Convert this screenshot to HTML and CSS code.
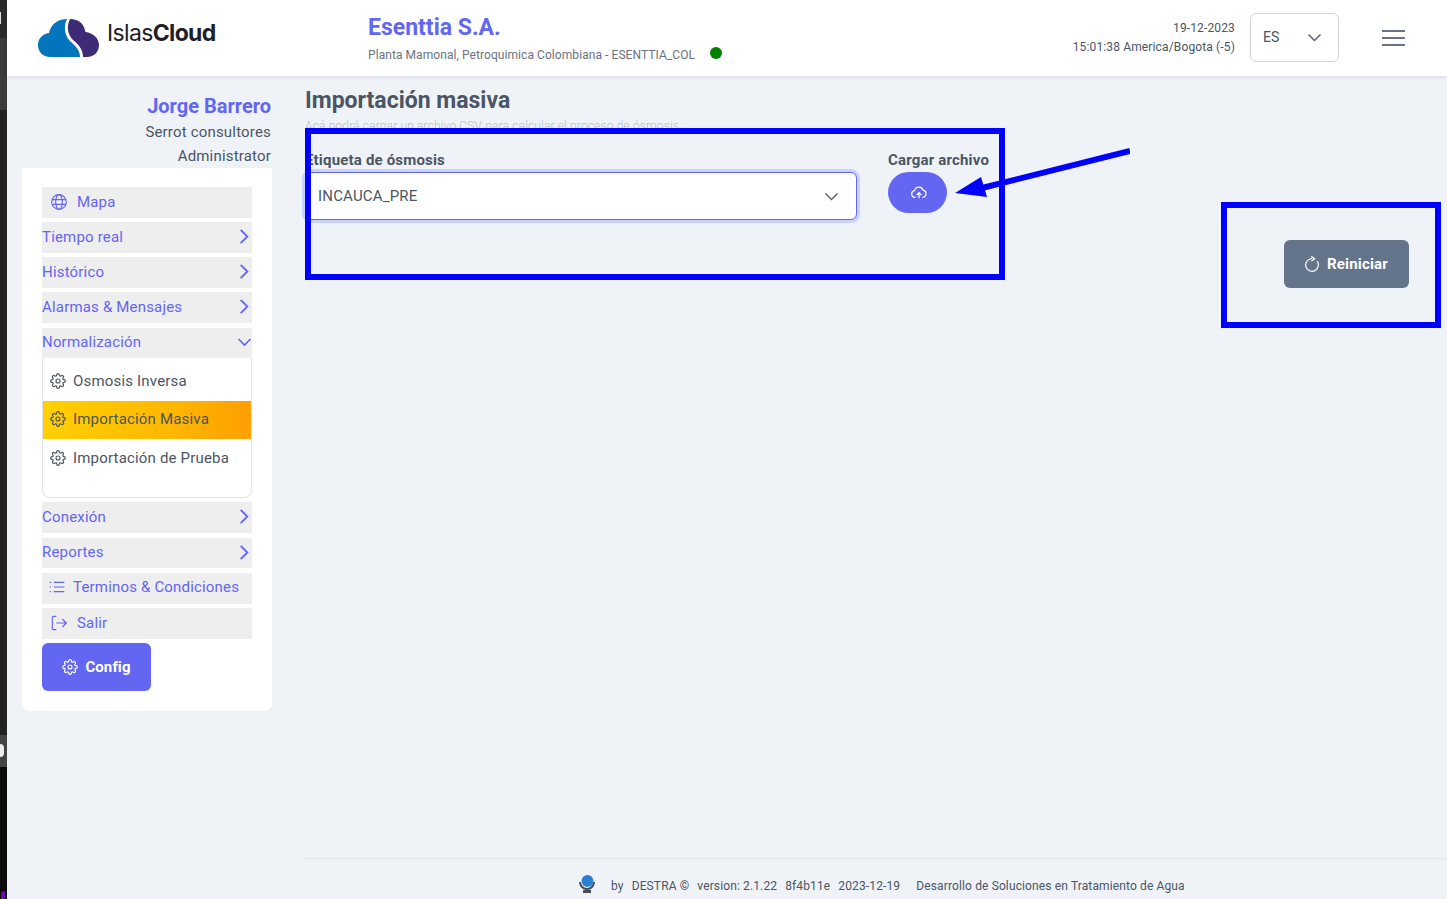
FILE: index.html
```html
<!DOCTYPE html>
<html lang="es">
  <head>
    <meta charset="UTF-8" />
    <meta name="viewport" content="width=device-width, initial-scale=1.0" />
    <title>IslasCloud - Importación masiva</title>
    <link rel="stylesheet" href="styles.css">
  </head>
  <body>
    <svg class="defs" aria-hidden="true">
      <symbol id="gear" viewBox="0 0 24 24">
        <circle cx="12" cy="12" r="3" />
        <path d="M19.4 15a1.65 1.65 0 0 0 .33 1.82l.06.06a2 2 0 0 1 0 2.83 2 2 0 0 1-2.83 0l-.06-.06a1.65 1.65 0 0 0-1.82-.33 1.65 1.65 0 0 0-1 1.51V21a2 2 0 0 1-2 2 2 2 0 0 1-2-2v-.09A1.65 1.65 0 0 0 9 19.4a1.65 1.65 0 0 0-1.82.33l-.06.06a2 2 0 0 1-2.83 0 2 2 0 0 1 0-2.83l.06-.06a1.65 1.65 0 0 0 .33-1.82 1.65 1.65 0 0 0-1.51-1H3a2 2 0 0 1-2-2 2 2 0 0 1 2-2h.09A1.65 1.65 0 0 0 4.6 9a1.65 1.65 0 0 0-.33-1.82l-.06-.06a2 2 0 0 1 0-2.83 2 2 0 0 1 2.83 0l.06.06a1.65 1.65 0 0 0 1.82.33H9a1.65 1.65 0 0 0 1-1.51V3a2 2 0 0 1 2-2 2 2 0 0 1 2 2v.09a1.65 1.65 0 0 0 1 1.51 1.65 1.65 0 0 0 1.82-.33l.06-.06a2 2 0 0 1 2.83 0 2 2 0 0 1 0 2.83l-.06.06a1.65 1.65 0 0 0-.33 1.82V9a1.65 1.65 0 0 0 1.51 1H21a2 2 0 0 1 2 2 2 2 0 0 1-2 2h-.09a1.65 1.65 0 0 0-1.51 1z" />
      </symbol>
      <symbol id="right" viewBox="0 0 12 20"><path d="M2 2l8 8-8 8" /></symbol>
      <symbol id="down" viewBox="0 0 20 12"><path d="M2 2l8 8 8-8" /></symbol>
    </svg>

    <div class="strip">
      <div class="strip-a"></div>
      <div class="strip-b"></div>
      <div class="strip-c"></div>
      <div class="strip-d"></div>
      <div class="strip-e"></div>
    </div>

    <div class="app">
      <header class="topbar">
        <div class="brand">
          <svg class="logo" viewBox="0 0 61 38">
            <path fill="#0275bd" d="M12 38H42C42 30 36 26 32 22C27 17 25 8 29 0C20 0 13 5 11 14C4 15 0 20 0 26C0 33 5 38 12 38Z" />
            <path fill="#3e2a77" d="M45 38C45 30 40 25 35 21C30 16 28 8 32 0C41 0 46 5 47.5 13C55 14 61 19 61 26C61 33 56 38 49 38Z" />
          </svg>
          <span class="brand-name">Islas<b>Cloud</b></span>
        </div>
        <div class="company">
          <h1>Esenttia S.A.</h1>
          <p>Planta Mamonal, Petroquimica Colombiana - ESENTTIA_COL <span class="status-dot"></span></p>
        </div>
        <div class="clock">
          <div>19-12-2023</div>
          <div>15:01:38 America/Bogota (-5)</div>
        </div>
        <div class="lang">
          <span>ES</span>
          <svg class="lang-chevron"><use href="#down" /></svg>
        </div>
        <div class="burger"><i></i><i></i><i></i></div>
      </header>

      <div class="layout">
        <aside class="sidebar">
          <div class="user">
            <div class="user-name">Jorge Barrero</div>
            <div>Serrot consultores</div>
            <div>Administrator</div>
          </div>
          <nav class="menu">
            <a class="row row-icon">
              <svg class="row-svg" viewBox="0 0 24 24">
                <circle cx="12" cy="12" r="11" />
                <ellipse cx="12" cy="12" rx="5" ry="11" />
                <path d="M2 8.500h20M2 15.500h20" />
              </svg>
              Mapa
            </a>
            <a class="row">Tiempo real <svg class="chev"><use href="#right" /></svg></a>
            <a class="row">Histórico <svg class="chev"><use href="#right" /></svg></a>
            <a class="row">Alarmas &amp; Mensajes <svg class="chev"><use href="#right" /></svg></a>
            <a class="row row-open">Normalización <svg class="chev-down"><use href="#down" /></svg></a>
            <div class="submenu">
              <a class="sub-item"><svg class="gear"><use href="#gear" /></svg>Osmosis Inversa</a>
              <a class="sub-item active"><svg class="gear"><use href="#gear" /></svg>Importación Masiva</a>
              <a class="sub-item"><svg class="gear"><use href="#gear" /></svg>Importación de Prueba</a>
            </div>
            <a class="row row-conn">Conexión <svg class="chev"><use href="#right" /></svg></a>
            <a class="row row-reports">Reportes <svg class="chev"><use href="#right" /></svg></a>
            <a class="row row-terms">
              <svg class="row-svg" viewBox="0 0 24 24">
                <path d="M7 5h16M7 12h16M7 19h16" />
                <path d="M1 5h2M1 12h2M1 19h2" />
              </svg>
              Terminos &amp; Condiciones
            </a>
            <a class="row row-exit">
              <svg class="row-svg" viewBox="0 0 24 24">
                <path d="M8 2H3.500a1.500 1.500 0 0 0-1.500 1.500v17a1.500 1.500 0 0 0 1.500 1.500H8" />
                <path d="M8 12h15M17 6l6 6-6 6" />
              </svg>
              Salir
            </a>
            <button class="btn btn-config"><svg class="gear"><use href="#gear" /></svg>Config</button>
          </nav>
        </aside>

        <main class="content">
          <h2>Importación masiva</h2>
          <p class="subtitle">Acá podrá cargar un archivo CSV para calcular el proceso de ósmosis</p>
          <div class="form-row">
            <div class="field">
              <label>Etiqueta de ósmosis</label>
              <div class="select">
                <span>INCAUCA_PRE</span>
                <svg class="select-chevron"><use href="#down" /></svg>
              </div>
            </div>
            <div class="field">
              <label>Cargar archivo</label>
              <button class="upload">
                <svg viewBox="0 0 24 24">
                  <path d="M7 18.500H6a5 5 0 0 1-.6-9.960A6.500 6.500 0 0 1 18 7.600a5.500 5.500 0 0 1-.500 10.900H17" />
                  <path d="M12 20v-8M8.500 15l3.500-3.500 3.500 3.500" />
                </svg>
              </button>
            </div>
          </div>
          <div class="actions">
            <button class="btn btn-reset">
              <svg viewBox="0 0 24 24">
                <path d="M16 4h-3.500A9.500 9.500 0 1 0 21 11" transform="rotate(-22 12 13)" />
                <path d="M11 .5l5 3.500-5 3.500" />
              </svg>
              Reiniciar
            </button>
          </div>
          <footer class="footer">
            <svg class="footer-logo" viewBox="0 0 18 18">
              <path fill="#444c55" d="M1 7a8 8 0 0 0 16 0h-2a6 6 0 0 1-12 0zM5 15h8v3H5z" />
              <circle cx="9.500" cy="6" r="6" fill="#2d7fd3" />
            </svg>
            <span>by</span>
            <span>DESTRA ©</span>
            <span>version: 2.1.22</span>
            <span>8f4b11e</span>
            <span>2023-12-19</span>
            <span class="footer-tail">Desarrollo de Soluciones en Tratamiento de Agua</span>
          </footer>
        </main>
      </div>
    </div>

    <!-- anotaciones del pantallazo -->
    <div class="mark mark-form"></div>
    <div class="mark mark-reset"></div>
    <svg class="arrow" viewBox="0 0 190 60">
      <path d="M190 11L38 49" stroke="#0000ff" stroke-width="6" fill="none" />
      <path d="M15 53L41 37 47 57z" fill="#0000ff" />
    </svg>
  </body>
</html>
```

FILE: styles.css
```css
* {
  box-sizing: border-box;
}

html,
body {
  height: 100%;
}

body {
  margin: 0;
  display: flex;
  height: 899px;
  overflow: hidden;
  background-color: #eff3f8;
  color: #4b5563;
  font-family: Roboto, "Liberation Sans", sans-serif;
  font-size: 15px;
  letter-spacing: 0.18px;
}

.defs {
  position: absolute;
  width: 0;
  height: 0;
}

/* ventana de atras, se ve un poco a la izquierda */
.strip {
  width: 7px;
  flex-shrink: 0;
  display: flex;
  flex-direction: column;
}

.strip-a {
  position: relative;
  height: 38px;
  background-color: #2a2a2a;
}

.strip-a::after {
  content: "";
  position: absolute;
  left: 0;
  top: 12px;
  width: 1px;
  height: 12px;
  background-color: #ddd;
}

.strip-b {
  height: 72px;
  background-color: #3a3a3a;
}

.strip-c {
  height: 625px;
  background-color: #222;
}

.strip-d {
  position: relative;
  height: 32px;
  background-color: #444;
}

.strip-d::after {
  content: "";
  position: absolute;
  left: 0;
  top: 9px;
  width: 4px;
  height: 13px;
  border-radius: 0 6px 6px 0;
  background-color: #eee;
}

.strip-e {
  position: relative;
  flex: 1;
  background-color: #0a0a0a;
}

.strip-e::after {
  content: "";
  position: absolute;
  left: 1px;
  bottom: 0;
  width: 4px;
  height: 8px;
  border-radius: 4px 0 0 0;
  background-color: #6a0dad;
}

.app {
  flex: 1;
  min-width: 0;
  display: flex;
  flex-direction: column;
}

.topbar {
  height: 76px;
  flex-shrink: 0;
  display: flex;
  align-items: center;
  padding-left: 31px;
  background-color: #fff;
  box-shadow: 0 1px 4px rgba(0, 0, 0, 0.12);
}

.brand {
  width: 330px;
  display: flex;
  align-items: center;
  gap: 8px;
}

.logo {
  width: 61px;
  height: 38px;
}

.brand-name {
  margin-bottom: 10px;
  font-family: Inter, sans-serif;
  font-size: 23px;
  letter-spacing: -0.65px;
  color: #1f2125;
}

.brand-name b {
  font-weight: 700;
}

.company {
  flex: 1;
}

.company h1 {
  margin: 0 0 5px;
  font-size: 23px;
  font-weight: 700;
  line-height: 28px;
  letter-spacing: 0;
  color: #6366f1;
}

.company p {
  margin: 0;
  font-size: 12px;
  line-height: 16px;
  letter-spacing: 0.07px;
  color: #6b7280;
}

.status-dot {
  display: inline-block;
  width: 12px;
  height: 12px;
  margin-left: 12px;
  border-radius: 50%;
  background-color: #008000;
}

.clock {
  font-size: 12px;
  line-height: 19px;
  letter-spacing: 0.14px;
  text-align: right;
  color: #4b5563;
}

.lang {
  width: 89px;
  height: 49px;
  margin-left: 15px;
  margin-bottom: 2px;
  padding: 0 16px 0 12px;
  display: flex;
  align-items: center;
  justify-content: space-between;
  border: 1px solid #d1d5db;
  border-radius: 6px;
  font-size: 14px;
  letter-spacing: 0;
}

.lang-chevron {
  width: 15px;
  height: 9px;
  fill: none;
  stroke: #5b6470;
  stroke-width: 2;
}

.burger {
  width: 23px;
  margin: 0 42px 0 43px;
  display: flex;
  flex-direction: column;
  gap: 5px;
}

.burger i {
  height: 2px;
  background-color: #6b7280;
}

.layout {
  flex: 1;
  min-height: 0;
  display: flex;
}

.sidebar {
  width: 298px;
  flex-shrink: 0;
  padding-left: 15px;
}

.user {
  width: 249px;
  padding-top: 18px;
  text-align: right;
  line-height: 24px;
}

.user-name {
  font-size: 20px;
  font-weight: 700;
  line-height: 24px;
  letter-spacing: 0;
  color: #6366f1;
  margin-bottom: 2px;
}

.menu {
  width: 250px;
  height: 543px;
  padding: 19px 20px 0;
  background-color: #fff;
  border-radius: 0 0 8px 8px;
}

.row {
  height: 31px;
  margin-bottom: 4px;
  padding-bottom: 2px;
  display: flex;
  align-items: center;
  justify-content: space-between;
  background-color: #eee;
  color: #6366f1;
}

.row-icon,
.row-terms,
.row-exit {
  justify-content: flex-start;
}

.row-icon {
  padding-left: 9px;
  gap: 10px;
}

.row-terms {
  padding-left: 7px;
  padding-bottom: 4px;
  gap: 8px;
}

.row-exit {
  padding-left: 9px;
  gap: 10px;
}

.row-open {
  height: 30px;
  margin: 5px 0 0;
}

.row-conn {
  margin-bottom: 5px;
}

.row-reports {
  height: 30px;
  margin-bottom: 5px;
}

.row-svg {
  width: 16px;
  height: 16px;
  fill: none;
  stroke: #6366f1;
  stroke-width: 1.700;
}

.chev {
  width: 10px;
  height: 17px;
  margin-right: 3px;
  fill: none;
  stroke: #6366f1;
  stroke-width: 2.200;
}

.chev-down {
  width: 15px;
  height: 10px;
  fill: none;
  stroke: #6366f1;
  stroke-width: 2.200;
}

.submenu {
  height: 140px;
  margin-bottom: 4px;
  padding-top: 4px;
  border: 1px solid #e2e4e9;
  border-top: none;
  border-radius: 0 0 8px 8px;
}

.sub-item {
  height: 38.500px;
  padding-left: 7px;
  padding-bottom: 1px;
  display: flex;
  align-items: center;
  gap: 7px;
}

.sub-item.active {
  background: linear-gradient(90deg, #ffd000 0%, #ffb800 60%, #ff9f00 100%);
}

.gear {
  width: 16px;
  height: 16px;
  flex-shrink: 0;
  fill: none;
  stroke: currentColor;
  stroke-width: 1.800;
}

.btn {
  display: flex;
  align-items: center;
  justify-content: center;
  height: 48px;
  border: none;
  border-radius: 6px;
  color: #fff;
  font-family: inherit;
  font-size: 15px;
  font-weight: 700;
  letter-spacing: 0.1px;
}

.btn-config {
  width: 109px;
  gap: 7px;
  background-color: #6366f1;
}

.content {
  flex: 1;
  min-width: 0;
  display: flex;
  flex-direction: column;
}

.content h2 {
  margin: 10px 0 0;
  font-size: 23px;
  font-weight: 700;
  line-height: 30px;
  letter-spacing: 0;
  color: #4b5563;
}

.subtitle {
  margin: 2px 0 0;
  font-size: 12px;
  line-height: 16px;
  letter-spacing: 0.15px;
  color: #b9bec7;
  font-weight: 300;
}

.form-row {
  margin-top: 18px;
  display: flex;
  gap: 31px;
}

.field label {
  display: block;
  margin-bottom: 3px;
  font-size: 15px;
  font-weight: 700;
  line-height: 17px;
}

.select {
  width: 552px;
  height: 48px;
  padding: 0 17px 0 12px;
  display: flex;
  align-items: center;
  justify-content: space-between;
  background-color: #fff;
  border: 1px solid #6366f1;
  border-radius: 6px;
  box-shadow: 0 0 0 3px #c7d2fe;
  color: #4b5563;
  font-size: 15px;
}

.select-chevron {
  width: 15px;
  height: 9px;
  fill: none;
  stroke: #5b6470;
  stroke-width: 2;
}

.upload {
  width: 59px;
  height: 41px;
  padding: 0 0 0 3px;
  display: flex;
  align-items: center;
  justify-content: center;
  background-color: #6366f1;
  border: none;
  border-radius: 21px;
}

.upload svg {
  width: 16px;
  height: 16px;
  fill: none;
  stroke: #fff;
  stroke-width: 1.800;
}

.actions {
  margin-top: 20px;
  padding-right: 38px;
  display: flex;
  justify-content: flex-end;
}

.btn-reset {
  width: 125px;
  gap: 7px;
  padding-bottom: 2px;
  background-color: #64748b;
  letter-spacing: 0.18px;
}

.btn-reset svg {
  width: 16px;
  height: 16px;
  margin-left: -1px;
  fill: none;
  stroke: #fff;
  stroke-width: 1.800;
}

.footer {
  height: 41px;
  margin-top: auto;
  padding: 14px 0 0 273px;
  display: flex;
  align-items: center;
  gap: 8px;
  border-top: 1px solid #e2e6ec;
  font-size: 12px;
  letter-spacing: 0.13px;
  color: #4b5563;
}

.footer-logo {
  width: 18px;
  height: 18px;
  margin-right: 7px;
  margin-top: -5px;
}

.footer-tail {
  margin-left: 8px;
}

.mark {
  position: absolute;
  border: 6px solid #0000ff;
}

.mark-form {
  left: 305px;
  top: 128px;
  width: 700px;
  height: 152px;
}

.mark-reset {
  left: 1221px;
  top: 202px;
  width: 220px;
  height: 126px;
}

.arrow {
  position: absolute;
  left: 940px;
  top: 140px;
  width: 190px;
  height: 60px;
}
```
